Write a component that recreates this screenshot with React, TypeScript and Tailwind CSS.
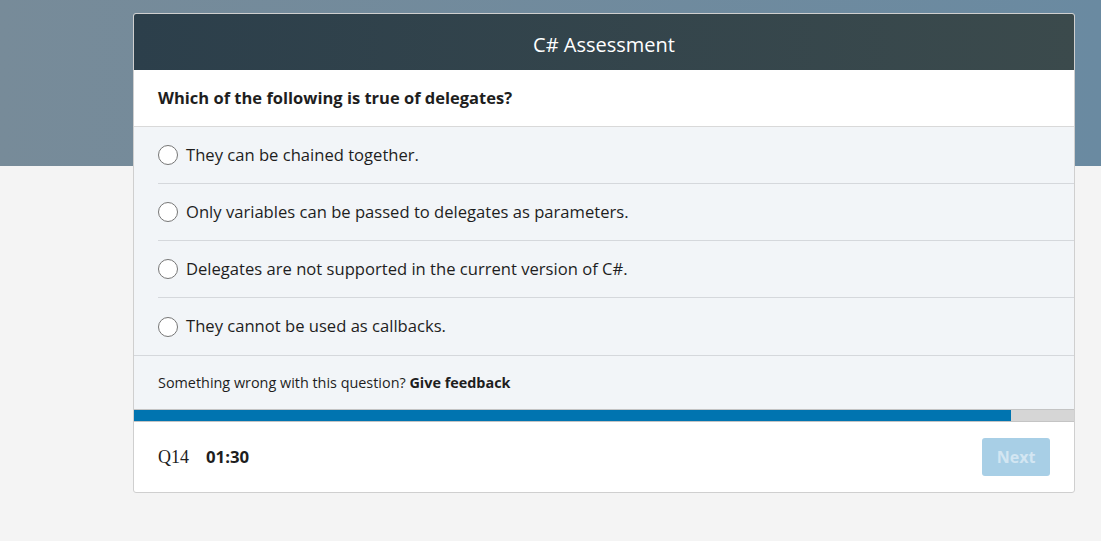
const options = [
  "They can be chained together.",
  "Only variables can be passed to delegates as parameters.",
  "Delegates are not supported in the current version of C#.",
  "They cannot be used as callbacks.",
];

export default function App() {
  return (
    <div className="relative min-h-[541px] bg-[#f4f4f4] font-['Open_Sans',sans-serif] text-[#1e1e1e]">
      <div className="absolute inset-x-0 top-0 h-[166px] bg-gradient-to-r from-[#778b99] to-[#6a8aa1]" />
      <div className="relative pt-[13px] pl-[133px] pr-[26px]">
        <div className="w-[942px] overflow-hidden rounded-[3px] border border-[#cfcfcf] bg-white">
          <div className="flex h-[56px] items-center justify-center bg-gradient-to-r from-[#2c3f4b] to-[#3b4a4c] pt-[5px]">
            <h1 className="text-[20px] text-white">C# Assessment</h1>
          </div>
          <div className="flex h-[57px] items-center border-b border-[#d9d9d9] px-6">
            <p className="text-[16.5px] font-bold">Which of the following is true of delegates?</p>
          </div>
          <div className="bg-[#f2f5f8]">
            {options.map((o, i) => (
              <div key={o} className="pl-6">
                <label className={"flex h-[57px] items-center gap-2 " + (i < options.length - 1 ? "border-b border-[#d5d8dc]" : "")}>
                  <span className="h-[20px] w-[20px] shrink-0 rounded-full border-[1.5px] border-[#767676] bg-white" />
                  <span className="text-[16.6px]">{o}</span>
                </label>
              </div>
            ))}
            <div className="flex h-[54px] items-center border-t border-[#d5d8dc] px-6 text-[14.4px]">
              <span>Something wrong with this question?&nbsp;</span>
              <span className="font-bold">Give feedback</span>
            </div>
          </div>
          <div className="h-[13px] border-y border-[#c4c4c4] bg-[#d6d6d6]">
            <div className="h-full w-[93.3%] bg-[#0074b0]" />
          </div>
          <div className="flex h-[70px] items-center justify-between px-6">
            <div className="flex items-center gap-[17px]">
              <span className="font-['Liberation_Serif',serif] text-[18px]">Q14</span>
              <span className="text-[16.8px] font-bold">01:30</span>
            </div>
            <button className="h-[38px] w-[68px] rounded-[3px] bg-[#a8cfe6] text-[16px] font-bold text-[#d3e6f2]">
              Next
            </button>
          </div>
        </div>
      </div>
    </div>
  );
}
